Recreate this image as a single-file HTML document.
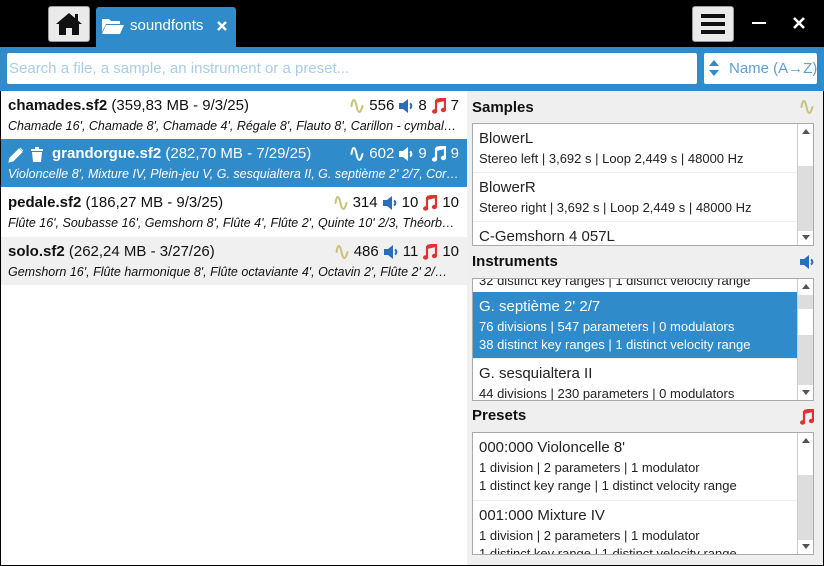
<!DOCTYPE html>
<html><head><meta charset="utf-8"><style>
*{box-sizing:border-box;margin:0;padding:0}
body{width:824px;height:566px;background:#000;font-family:"Liberation Sans","DejaVu Sans",sans-serif;position:relative;overflow:hidden}
.abs{position:absolute}
.btn{background:#eaeaea;border:1px solid #999;border-radius:3px}
.blue{background:#2f8bc9}
.row{position:absolute;left:1px;width:466px;height:48px;padding:4px 7px;color:#111}
.t{font-size:15px;white-space:nowrap;height:22px;line-height:22px}
.t b{font-weight:bold}
.s{font-size:12.5px;font-style:italic;white-space:nowrap;overflow:hidden;line-height:18px;width:452px}
.cnt{position:absolute;right:8px;top:4px;font-size:15px;line-height:22px;display:flex;align-items:center;gap:5px}
.hd{position:absolute;left:472px;font-weight:bold;font-size:15px;color:#111}
.box{position:absolute;left:472px;width:342px;background:#fff;border:1px solid #aaa;overflow:hidden}
.it{height:49px;padding:4px 6px;border-bottom:1px solid #eee;font-size:13px;color:#222;line-height:18px;white-space:nowrap}
.it .n{font-size:15px;line-height:22px}
.sb{position:absolute;right:0;top:0;bottom:0;width:16px;background:#fff;border-left:1px solid #ccc}
.sb .th{position:absolute;left:0;right:0;background:#ddd}
.sb .a{position:absolute;left:4px;width:0;height:0;border-left:4px solid transparent;border-right:4px solid transparent}
svg{display:block}
</style></head><body>
<svg width="0" height="0" style="position:absolute"><defs>
<symbol id="w" viewBox="0 0 14 18"><path d="M1.5 9 C2.5 1,5 1,6.5 9 S10.5 17,12.5 9" fill="none" stroke="currentColor" stroke-width="2" stroke-linecap="round"/></symbol>
<symbol id="sp" viewBox="0 0 14 16"><path d="M0 5h4l5-4v14l-5-4H0Z" fill="currentColor"/><path d="M11 5.5a3 3 0 0 1 0 5" fill="none" stroke="currentColor" stroke-width="2"/></symbol>
<symbol id="no" viewBox="0 0 14 16"><path d="M4 2L13 0V12" fill="none" stroke="currentColor" stroke-width="2.2"/><path d="M4 2V14" stroke="currentColor" stroke-width="2.2"/><ellipse cx="2.6" cy="13.5" rx="2.6" ry="2.2" fill="currentColor"/><ellipse cx="11.4" cy="12" rx="2.6" ry="2.2" fill="currentColor"/><path d="M4 1.5L13 -0.5V3L4 5Z" fill="currentColor"/></symbol>
</defs></svg>
<div class="abs" style="left:0;top:0;width:824px;height:566px;background:#000;border-radius:10px 10px 0 0"></div>
<div class="abs btn" style="left:48px;top:6px;width:42px;height:36px"></div>
<svg class="abs" style="left:55px;top:11px" width="28" height="26" viewBox="0 0 28 26"><path d="M14 2 L1 13 L4 13 L4 24 L11 24 L11 17 L17 17 L17 24 L24 24 L24 13 L27 13 Z" fill="#111"/><rect x="20" y="3" width="3" height="7" fill="#111"/></svg>
<div class="abs blue" style="left:96px;top:7px;width:140px;height:42px;border-radius:3px 3px 0 0"></div>
<svg class="abs" style="left:101px;top:17px" width="24" height="18" viewBox="0 0 24 18"><path d="M1 2h7l2 2h9v3H5L1 15Z" fill="#fff"/><path d="M5 8h18l-4 9H1Z" fill="#fff"/></svg>
<div class="abs" style="left:130px;top:15px;color:#fff;font-size:15px;line-height:22px">soundfonts</div>
<svg class="abs" style="left:217px;top:21px" width="10" height="10"><path d="M1 1L9 9M9 1L1 9" stroke="#fff" stroke-width="2.4"/></svg>
<div class="abs btn" style="left:692px;top:6px;width:42px;height:36px"></div>
<div class="abs" style="left:701px;top:14px;width:24px;height:4px;background:#111"></div>
<div class="abs" style="left:701px;top:22px;width:24px;height:4px;background:#111"></div>
<div class="abs" style="left:701px;top:30px;width:24px;height:4px;background:#111"></div>
<div class="abs" style="left:752px;top:22px;width:14px;height:2px;background:#fff"></div>
<svg class="abs" style="left:793px;top:17px" width="12" height="12"><path d="M1 1L11 11M11 1L1 11" stroke="#fff" stroke-width="2.6"/></svg>
<div class="abs blue" style="left:0;top:47px;width:824px;height:44px"></div>
<div class="abs" style="left:7px;top:53px;width:690px;height:31px;background:#fff;border-radius:2px;color:#a9cde8;font-size:15px;line-height:31px;padding-left:2px;white-space:nowrap">Search a file, a sample, an instrument or a preset...</div>
<div class="abs" style="left:704px;top:53px;width:113px;height:31px;background:#fff;border-radius:2px;color:#5d9fd3;font-size:15px;line-height:31px;padding-left:25px;white-space:nowrap">Name (A→Z)</div>
<svg class="abs" style="left:709px;top:60px" width="10" height="16"><path d="M5 0L10 6H0Z M5 16L10 10H0Z" fill="#2f8bc9"/></svg>
<div class="abs" style="left:1px;top:91px;width:822px;height:474px;background:#fff"></div>
<div class="abs" style="left:467px;top:91px;width:356px;height:474px;background:#efefef"></div>
<div class="row" style="top:91px;background:#fff"><div class="t"><b>chamades.sf2</b> (359,83 MB - 9/3/25)</div><div class="s">Chamade 16', Chamade 8', Chamade 4', Régale 8', Flauto 8', Carillon - cymbal…</div>
<div class="cnt"><svg width="14" height="18" style="color:#c7c27a"><use href="#w"/></svg>556 <svg width="14" height="16" style="color:#2a6ebb"><use href="#sp"/></svg>8 <svg width="14" height="16" style="color:#d33"><use href="#no"/></svg>7</div></div>
<div class="row" style="top:139px;background:#2f8bc9;color:#fff"><div class="t" style="padding-left:44px"><b>grandorgue.sf2</b> (282,70 MB - 7/29/25)</div><div class="s" style="color:#fff">Violoncelle 8', Mixture IV, Plein-jeu V, G. sesquialtera II, G. septième 2' 2/7, Cor…</div>
<div class="cnt" style="color:#fff"><svg width="14" height="18"><use href="#w"/></svg>602 <svg width="14" height="16"><use href="#sp"/></svg>9 <svg width="14" height="16"><use href="#no"/></svg>9</div>
<svg class="abs" style="left:7px;top:8px" width="16" height="16"><path d="M1 15l1-4 9-9 3 3-9 9Z M12 1l3 3" fill="#fff" stroke="#fff" stroke-width="1"/></svg>
<svg class="abs" style="left:30px;top:8px" width="12" height="15"><path d="M0 2h12v2H0Z M4 0h4v2H4Z M1 5h10l-1 10H2Z" fill="#fff"/></svg></div>
<div class="row" style="top:188px;background:#fff"><div class="t"><b>pedale.sf2</b> (186,27 MB - 9/3/25)</div><div class="s">Flûte 16', Soubasse 16', Gemshorn 8', Flûte 4', Flûte 2', Quinte 10' 2/3, Théorb…</div>
<div class="cnt"><svg width="14" height="18" style="color:#c7c27a"><use href="#w"/></svg>314 <svg width="14" height="16" style="color:#2a6ebb"><use href="#sp"/></svg>10 <svg width="14" height="16" style="color:#d33"><use href="#no"/></svg>10</div></div>
<div class="row" style="top:237px;background:#f0f0f0"><div class="t"><b>solo.sf2</b> (262,24 MB - 3/27/26)</div><div class="s">Gemshorn 16', Flûte harmonique 8', Flûte octaviante 4', Octavin 2', Flûte 2' 2/…</div>
<div class="cnt"><svg width="14" height="18" style="color:#c7c27a"><use href="#w"/></svg>486 <svg width="14" height="16" style="color:#2a6ebb"><use href="#sp"/></svg>11 <svg width="14" height="16" style="color:#d33"><use href="#no"/></svg>10</div></div>
<div class="hd" style="top:99px">Samples</div><svg class="abs" style="left:800px;top:98px;color:#c7c27a" width="14" height="18"><use href="#w"/></svg>
<div class="box" style="top:123px;height:123px">
<div class="it"><div class="n">BlowerL</div>Stereo left | 3,692 s | Loop 2,449 s | 48000 Hz</div>
<div class="it"><div class="n">BlowerR</div>Stereo right | 3,692 s | Loop 2,449 s | 48000 Hz</div>
<div class="it"><div class="n">C-Gemshorn 4 057L</div></div>
<div class="sb"><div class="a" style="top:5px;border-bottom:5px solid #555"></div><div class="th" style="top:42px;height:65px"></div><div class="a" style="bottom:5px;border-top:5px solid #555"></div></div></div>
<div class="hd" style="top:253px">Instruments</div><svg class="abs" style="left:800px;top:254px;color:#2a6ebb" width="14" height="16"><use href="#sp"/></svg>
<div class="box" style="top:278px;height:123px">
<div style="height:13px;font-size:13px;line-height:4px;color:#222;padding-left:6px;overflow:hidden">32 distinct key ranges | 1 distinct velocity range</div>
<div class="it" style="background:#2f8bc9;color:#fff;height:67px"><div class="n">G. septième 2' 2/7</div>76 divisions | 547 parameters | 0 modulators<br>38 distinct key ranges | 1 distinct velocity range</div>
<div class="it"><div class="n">G. sesquialtera II</div>44 divisions | 230 parameters | 0 modulators</div>
<div class="sb"><div class="a" style="top:5px;border-bottom:5px solid #555"></div><div class="th" style="top:16px;height:14px"></div><div class="th" style="top:56px;height:50px"></div><div class="a" style="bottom:5px;border-top:5px solid #555"></div></div></div>
<div class="hd" style="top:407px">Presets</div><svg class="abs" style="left:800px;top:409px;color:#d33" width="14" height="16"><use href="#no"/></svg>
<div class="box" style="top:432px;height:123px">
<div class="it" style="height:68px"><div class="n">000:000 Violoncelle 8'</div>1 division | 2 parameters | 1 modulator<br>1 distinct key range | 1 distinct velocity range</div>
<div class="it" style="height:68px"><div class="n">001:000 Mixture IV</div>1 division | 2 parameters | 1 modulator<br>1 distinct key range | 1 distinct velocity range</div>
<div class="sb"><div class="a" style="top:5px;border-bottom:5px solid #555"></div><div class="th" style="top:42px;height:65px"></div><div class="a" style="bottom:5px;border-top:5px solid #555"></div></div></div>
</body></html>
